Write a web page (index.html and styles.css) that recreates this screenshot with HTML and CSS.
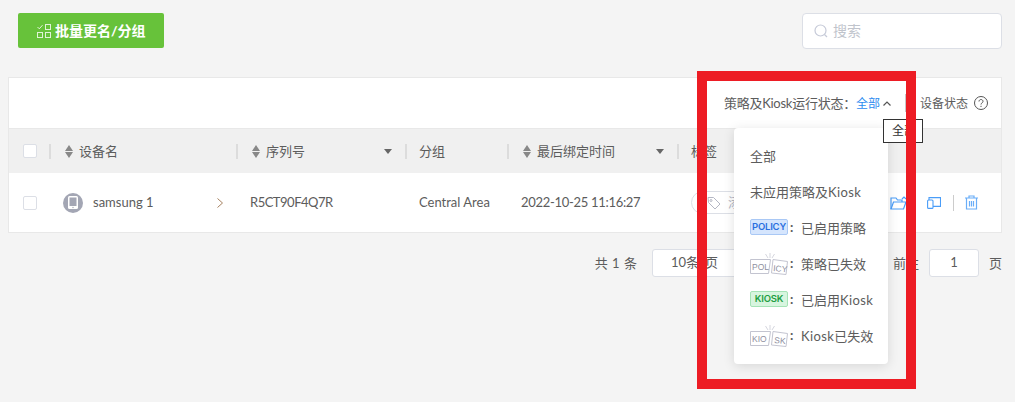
FILE: index.html
```html
<!DOCTYPE html>
<html lang="zh-CN">
<head>
    <meta charset="UTF-8">
    <title>设备列表</title>
    <link rel="stylesheet" href="styles.css">
</head>
<body>
    <div class="topbar">
        <button class="btn-green">
            <svg class="btn-icon" viewBox="0 0 14 14" width="14" height="14" fill="none" stroke="#fff" stroke-width="1">
                <path d="M0.5 3l1.8 1.8L5.500 1.200" opacity="0.8"/>
                <rect x="8.500" y="0.500" width="5" height="5" opacity="0.8"/>
                <rect x="0.500" y="8.500" width="5" height="5" opacity="0.8"/>
                <rect x="8.500" y="8.500" width="5" height="5" opacity="0.8"/>
            </svg>
            <span class="txt">批量更名/分组</span>
        </button>
        <div class="search">
            <svg viewBox="0 0 14 14" width="14" height="14" fill="none" stroke="#c6cad8" stroke-width="1.200">
                <circle cx="6.500" cy="6.500" r="5.500"/>
                <path d="M10.500 10.500l2.500 2.500"/>
            </svg>
            <span class="txt search-text">搜索</span>
        </div>
    </div>

    <div class="card">
        <div class="toolbar">
            <span class="txt status-label">策略及Kiosk运行状态：</span>
            <span class="txt status-value">全部</span>
            <svg class="status-arrow" viewBox="0 0 8 5" width="8" height="5" fill="none" stroke="#555" stroke-width="1.200">
                <path d="M0.500 4.500L4 1l3.500 3.500"/>
            </svg>
            <span class="toolbar-sep"></span>
            <span class="txt">设备状态</span>
            <svg class="help" viewBox="0 0 14 14" width="14" height="14" fill="none" stroke="#555" stroke-width="1">
                <circle cx="7" cy="7" r="6.500"/>
                <path d="M5 5.500c0-1.300 1-2 2-2s2 .7 2 1.900c0 1.500-2 1.500-2 3.100"/>
                <path d="M7 9.800v1.200"/>
            </svg>
        </div>

        <div class="row head">
            <div class="cell"><span class="checkbox"></span></div>
            <div class="cell"><span class="sep"></span><span class="sort"></span><span class="txt">设备名</span></div>
            <div class="cell"><span class="sep"></span><span class="sort"></span><span class="txt">序列号</span><span class="filter filter-serial"></span></div>
            <div class="cell"><span class="sep sep-tight"></span><span class="txt">分组</span></div>
            <div class="cell"><span class="sep"></span><span class="sort"></span><span class="txt">最后绑定时间</span><span class="filter filter-time"></span></div>
            <div class="cell"><span class="sep sep-tight"></span><span class="txt">标签</span></div>
        </div>

        <div class="row body-row">
            <div class="cell"><span class="checkbox"></span></div>
            <div class="cell cell-name">
                <span class="avatar">
                    <svg viewBox="0 0 10 13" width="10" height="13">
                        <rect x="0" y="0" width="10" height="13" rx="1.500" fill="#fff"/>
                        <rect x="1.500" y="1.500" width="7" height="8.500" fill="#a3a6b4"/>
                        <circle cx="5" cy="11.500" r="0.700" fill="#a3a6b4"/>
                    </svg>
                </span>
                <span class="txt">samsung 1</span>
                <svg class="chevron" viewBox="0 0 6 10" width="6" height="10" fill="none" stroke="#a5805f" stroke-width="1">
                    <path d="M0.500 0.500L5.500 5L0.500 9.500"/>
                </svg>
            </div>
            <div class="cell cell-pad"><span class="txt tight-digits">R5CT90F4Q7R</span></div>
            <div class="cell cell-pad"><span class="txt">Central Area</span></div>
            <div class="cell cell-pad"><span class="txt tight-time">2022-10-25 11:16:27</span></div>
            <div class="cell cell-pad cell-last">
                <span class="tag-pill">
                    <svg viewBox="0 0 14 14" width="14" height="14" fill="none" stroke="#b4b7c4" stroke-width="1">
                        <path d="M1 1.500h5.500l6.500 6.500-5 5-6.500-6.500z"/>
                        <circle cx="4" cy="4.500" r="1"/>
                    </svg>
                    <span class="txt">添加标签</span>
                </span>
                <span class="actions">
                    <svg viewBox="0 0 17 14" width="17" height="14" fill="none" stroke="#4a9df8" stroke-width="1.200">
                        <path d="M1 13V2h5l1.500 2H12v2"/>
                        <path d="M1 13l2.500-7H16l-2.500 7z"/>
                        <path d="M12 3l2-2 2 2"/>
                    </svg>
                    <svg class="act-book" viewBox="0 0 14 12" width="14" height="12" fill="none" stroke="#4a9df8" stroke-width="1.100">
                        <path d="M2 3V0.600h11.500v8.800H6"/>
                        <rect x="0.600" y="3" width="5.400" height="8.400" rx="1"/>
                    </svg>
                    <span class="act-sep"></span>
                    <svg viewBox="0 0 13 15" width="13" height="15" fill="none" stroke="#6aaef8" stroke-width="1.200">
                        <path d="M0 3h13M4 3V1h5v2"/>
                        <path d="M1.500 3v11h10V3"/>
                        <path d="M4.500 6v5.500M6.500 6v5.500M8.500 6v5.500"/>
                    </svg>
                </span>
            </div>
        </div>
    </div>

    <div class="pager">
        <span class="txt pager-total">共 1 条</span>
        <span class="page-size">10条/页</span>
        <span class="txt goto">前往</span>
        <span class="page-input">1</span>
        <span class="txt">页</span>
    </div>

    <!-- dropdown, tooltip and the red mark sit over the page -->
    <div class="dropdown">
        <div class="item">全部</div>
        <div class="item"><span>未应用策略及<span class="latin">Kiosk</span></span></div>
        <div class="item">
            <span class="badge badge-blue">POLICY</span><span class="colon">:</span>已启用策略
        </div>
        <div class="item">
            <svg class="broken" viewBox="0 0 38 24" width="38" height="24">
                <path d="M20 2v5M15.500 3l2.500 4M24.500 3l-2.500 4" stroke="#d5d6de" stroke-width="1" fill="none"/>
                <path d="M0.500 8.500h20l-2 14h-18z" fill="#fff" stroke="#c3c4d0"/>
                <path d="M23 8.500l14.500 2-1.500 13-14.500-1.500z" fill="#fff" stroke="#c3c4d0"/>
                <text x="2" y="19" class="broken-text">POL</text>
                <text x="23" y="20" class="broken-text" transform="rotate(5 23 20)">ICY</text>
            </svg><span class="colon">:</span>策略已失效
        </div>
        <div class="item">
            <span class="badge badge-green">KIOSK</span><span class="colon">:</span><span>已启用<span class="latin">Kiosk</span></span>
        </div>
        <div class="item">
            <svg class="broken" viewBox="0 0 38 24" width="38" height="24">
                <path d="M20 2v5M15.500 3l2.500 4M24.500 3l-2.500 4" stroke="#d5d6de" stroke-width="1" fill="none"/>
                <path d="M0.500 8.500h20l-2 14h-18z" fill="#fff" stroke="#c3c4d0"/>
                <path d="M23 8.500l14.500 2-1.500 13-14.500-1.500z" fill="#fff" stroke="#c3c4d0"/>
                <text x="2" y="19" class="broken-text">KIO</text>
                <text x="24" y="20" class="broken-text" transform="rotate(5 24 20)">SK</text>
            </svg><span class="colon">:</span><span><span class="latin">Kiosk</span>已失效</span>
        </div>
    </div>
    <div class="tip">全部</div>
    <div class="red-mark"></div>
</body>
</html>
```

FILE: styles.css
```css
html, body {
    margin: 0;
    height: 402px;
    overflow: hidden;
}

body {
    position: relative;
    background-color: #f4f4f4;
    font-family: Lato, "Noto Sans CJK SC", sans-serif;
    font-size: 13px;
    color: #5c5c5c;
}

/* nudges mixed latin/CJK text up to the line the icons sit on */
.txt {
    margin-bottom: 2px;
}

.latin {
    letter-spacing: 0.4px;
}

.topbar {
    display: flex;
    justify-content: space-between;
    align-items: flex-start;
    padding: 13px 13px 0 18px;
    height: 64px;
}

.btn-green {
    display: flex;
    align-items: center;
    width: 146px;
    height: 35px;
    padding: 0 0 0 19px;
    border: none;
    border-radius: 2px;
    background-color: #67c23a;
    color: #fff;
    font-family: inherit;
    font-size: 14px;
    font-weight: 700;
}

.btn-icon {
    margin-right: 4px;
}

.search {
    display: flex;
    align-items: center;
    box-sizing: border-box;
    width: 200px;
    height: 36px;
    padding-left: 11px;
    background-color: #fff;
    border: 1px solid #dcdfe6;
    border-radius: 4px;
    color: #c0c4cc;
}

.search-text {
    margin-left: 5px;
    font-size: 14px;
}

.card {
    margin: 0 13px 0 8px;
    background-color: #fff;
    border: 1px solid #e8e8e8;
}

.toolbar {
    display: flex;
    align-items: center;
    justify-content: flex-end;
    height: 50px;
    padding-right: 13px;
    font-size: 12px;
    border-bottom: 1px solid #e8e8e8;
}

.status-label {
    font-size: 13px;
    letter-spacing: -0.25px;
}

.status-value {
    color: #2d8cf0;
}

.status-arrow {
    margin-left: 3px;
}

.toolbar-sep {
    width: 1px;
    height: 18px;
    margin: 0 14px;
    background-color: #c8c8c8;
}

.help {
    margin-left: 6px;
}

.row {
    display: grid;
    grid-template-columns: 40px 187px 169px 102px 170px 1fr;
}

.head {
    height: 44px;
    background-color: #f0f0f0;
}

.body-row {
    height: 59px;
}

.cell {
    display: flex;
    align-items: center;
    white-space: nowrap;
    min-width: 0;
}

.cell:first-child {
    padding-left: 14px;
}

.sep {
    flex: none;
    width: 2px;
    height: 15px;
    margin-right: 14px;
    background-color: #dcdcdc;
}

.sep-tight {
    margin-right: 12px;
}

.sort {
    position: relative;
    flex: none;
    width: 9px;
    height: 13px;
    margin-right: 5px;
}

.sort::before,
.sort::after {
    content: "";
    position: absolute;
    left: 0;
    border-left: 4.5px solid transparent;
    border-right: 4.5px solid transparent;
}

.sort::before {
    top: 0;
    border-bottom: 6px solid #888;
}

.sort::after {
    bottom: 0;
    border-top: 6px solid #888;
}

.filter {
    flex: none;
    border-left: 4.5px solid transparent;
    border-right: 4.5px solid transparent;
    border-top: 5px solid #666;
}

.filter-serial {
    margin-left: 79px;
}

.filter-time {
    margin-left: 41px;
}

.checkbox {
    display: block;
    box-sizing: border-box;
    width: 14px;
    height: 14px;
    background-color: #fff;
    border: 1px solid #dcdfe6;
    border-radius: 2px;
}

.cell-pad {
    padding-left: 14px;
}

.tight-digits {
    letter-spacing: -0.5px;
}

.tight-time {
    letter-spacing: -0.3px;
}

.cell-name {
    padding-left: 14px;
}

.avatar {
    display: flex;
    align-items: center;
    justify-content: center;
    flex: none;
    width: 20px;
    height: 20px;
    margin-right: 10px;
    border-radius: 50%;
    background-color: #a3a6b4;
}

.chevron {
    margin-left: 63px;
}

.cell-last {
    justify-content: space-between;
    padding-right: 23px;
}

.tag-pill {
    display: flex;
    align-items: center;
    gap: 7px;
    width: 110px;
    height: 23px;
    padding-left: 15px;
    box-sizing: border-box;
    border: 1px solid #dcdfe6;
    border-radius: 12px;
    color: #b4b7c4;
}

.actions {
    display: flex;
    align-items: center;
}

.act-book {
    margin-left: 20px;
}

.act-sep {
    width: 1px;
    height: 16px;
    margin: 0 11px 0 12px;
    background-color: #ccc;
}

.pager {
    display: flex;
    align-items: center;
    justify-content: flex-end;
    margin-top: 16px;
    padding-right: 13px;
    height: 28px;
}

.pager-total {
    word-spacing: 1px;
}

.page-size {
    box-sizing: border-box;
    width: 120px;
    height: 28px;
    margin-left: 15px;
    padding-left: 18px;
    line-height: 25px;
    background-color: #fff;
    border: 1px solid #dcdfe6;
    border-radius: 3px;
}

.goto {
    margin-left: 121px;
}

.page-input {
    box-sizing: border-box;
    width: 50px;
    height: 28px;
    margin: 0 10px;
    line-height: 25px;
    text-align: center;
    background-color: #fff;
    border: 1px solid #dcdfe6;
    border-radius: 3px;
}

.dropdown {
    position: absolute;
    left: 734px;
    top: 128px;
    box-sizing: border-box;
    width: 154px;
    height: 236px;
    padding: 10px 0;
    background-color: #fff;
    border-radius: 4px;
    box-shadow: 0 2px 12px rgba(0, 0, 0, 0.12);
}

.item {
    display: flex;
    align-items: center;
    box-sizing: border-box;
    height: 36px;
    padding: 0 0 2px 16px;
    white-space: nowrap;
}

.badge {
    display: block;
    flex: none;
    box-sizing: border-box;
    width: 38px;
    height: 16px;
    border-radius: 2px;
    font-family: Inter, "Liberation Sans", sans-serif;
    font-size: 9.5px;
    font-weight: 600;
    letter-spacing: -0.2px;
    line-height: 14px;
    text-align: center;
}

.badge-blue {
    color: #2a6fe0;
    background-color: #d5e5fd;
    border: 1px solid #a9c8f5;
}

.badge-green {
    color: #1f9e43;
    background-color: #d7f5df;
    border: 1px solid #a5e3b6;
}

.broken {
    display: block;
    flex: none;
}

.broken-text {
    font-family: "Liberation Sans", sans-serif;
    font-size: 8.500px;
    fill: #8f90a0;
}

.colon {
    box-sizing: border-box;
    flex: none;
    width: 13px;
    padding-left: 2px;
    font-weight: 700;
}

.tip {
    position: absolute;
    left: 883px;
    top: 119px;
    box-sizing: border-box;
    width: 40px;
    height: 24px;
    padding-left: 8px;
    font-size: 12px;
    line-height: 22px;
    color: #333;
    background-color: #fff;
    border: 1px solid #333;
}

.red-mark {
    position: absolute;
    left: 697px;
    top: 71px;
    box-sizing: border-box;
    width: 219px;
    height: 318px;
    border: 10px solid #ed1c24;
}
```
